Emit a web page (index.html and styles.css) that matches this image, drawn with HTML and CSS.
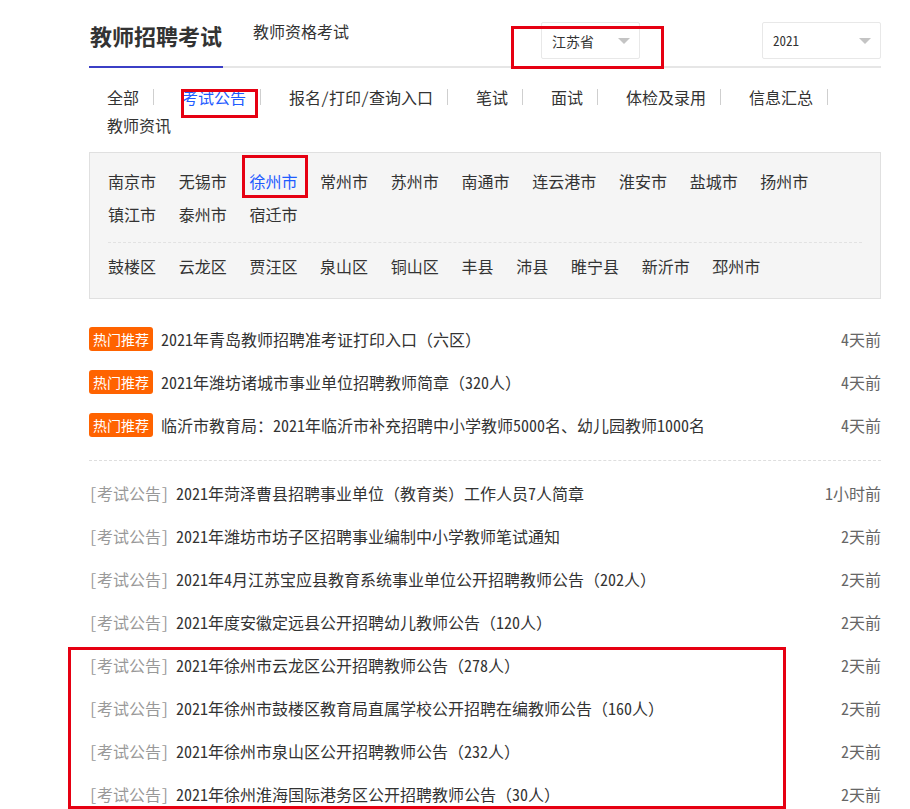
FILE: index.html
```html
<!DOCTYPE html>
<html lang="zh-CN">
<head>
<meta charset="utf-8">
<title>教师招聘考试</title>
<link rel="stylesheet" href="styles.css">
</head>
<body>
<div class="page">
  <div class="head">
    <div class="tab-main">教师招聘考试</div>
    <div class="tab-sub">教师资格考试</div>
    <div class="select select-prov"><span>江苏省</span><i class="tri"></i></div>
    <div class="select select-year"><span>2021</span><i class="tri"></i></div>
  </div>

  <ul class="nav">
    <li>全部</li>
    <li class="on">考试公告</li>
    <li>报名/打印/查询入口</li>
    <li>笔试</li>
    <li>面试</li>
    <li>体检及录用</li>
    <li>信息汇总</li>
    <li>教师资讯</li>
  </ul>

  <div class="cities">
    <div class="city-row">
      <span>南京市</span><span>无锡市</span><span class="on">徐州市</span><span>常州市</span><span>苏州市</span><span>南通市</span><span>连云港市</span><span>淮安市</span><span>盐城市</span><span>扬州市</span><span>镇江市</span><span>泰州市</span><span>宿迁市</span>
    </div>
    <div class="divider"></div>
    <div class="city-row">
      <span>鼓楼区</span><span>云龙区</span><span>贾汪区</span><span>泉山区</span><span>铜山区</span><span>丰县</span><span>沛县</span><span>睢宁县</span><span>新沂市</span><span>邳州市</span>
    </div>
  </div>

  <ul class="hot">
    <li class="item"><span class="badge">热门推荐</span><span class="title">2021年青岛教师招聘准考证打印入口<span class="fw">（</span>六区<span class="fw">）</span></span><span class="time">4天前</span></li>
    <li class="item"><span class="badge">热门推荐</span><span class="title">2021年潍坊诸城市事业单位招聘教师简章<span class="fw">（</span>320人<span class="fw">）</span></span><span class="time">4天前</span></li>
    <li class="item"><span class="badge">热门推荐</span><span class="title">临沂市教育局：2021年临沂市补充招聘中小学教师5000名、幼儿园教师1000名</span><span class="time">4天前</span></li>
  </ul>

  <div class="sep-line"></div>

  <ul class="list">
    <li class="item"><span class="cat">[考试公告]</span><span class="title">2021年菏泽曹县招聘事业单位<span class="fw">（</span>教育类<span class="fw">）</span>工作人员7人简章</span><span class="time">1小时前</span></li>
    <li class="item"><span class="cat">[考试公告]</span><span class="title">2021年潍坊市坊子区招聘事业编制中小学教师笔试通知</span><span class="time">2天前</span></li>
    <li class="item"><span class="cat">[考试公告]</span><span class="title">2021年4月江苏宝应县教育系统事业单位公开招聘教师公告<span class="fw">（</span>202人<span class="fw">）</span></span><span class="time">2天前</span></li>
    <li class="item"><span class="cat">[考试公告]</span><span class="title">2021年度安徽定远县公开招聘幼儿教师公告<span class="fw">（</span>120人<span class="fw">）</span></span><span class="time">2天前</span></li>
    <li class="item"><span class="cat">[考试公告]</span><span class="title">2021年徐州市云龙区公开招聘教师公告<span class="fw">（</span>278人<span class="fw">）</span></span><span class="time">2天前</span></li>
    <li class="item"><span class="cat">[考试公告]</span><span class="title">2021年徐州市鼓楼区教育局直属学校公开招聘在编教师公告<span class="fw">（</span>160人<span class="fw">）</span></span><span class="time">2天前</span></li>
    <li class="item"><span class="cat">[考试公告]</span><span class="title">2021年徐州市泉山区公开招聘教师公告<span class="fw">（</span>232人<span class="fw">）</span></span><span class="time">2天前</span></li>
    <li class="item"><span class="cat">[考试公告]</span><span class="title">2021年徐州淮海国际港务区公开招聘教师公告<span class="fw">（</span>30人<span class="fw">）</span></span><span class="time">2天前</span></li>
  </ul>
</div>

<div class="mark mark-prov"></div>
<div class="mark mark-tab"></div>
<div class="mark mark-city"></div>
<div class="mark mark-list"></div>
</body>
</html>
```

FILE: styles.css
```css
* { box-sizing: border-box; }
html, body { margin: 0; padding: 0; background: #fff; }
body {
  font-family: "Noto Sans CJK SC", "Noto Sans", sans-serif;
  font-feature-settings: "hwid";
  color: #333;
  font-size: 16px;
  overflow: hidden;
  position: relative;
}
ul { list-style: none; margin: 0; padding: 0; }

.page { margin-left: 89px; width: 792px; }

.fw { font-feature-settings: normal; }

/* header */
.head {
  display: flex;
  height: 68px;
  border-bottom: 2px solid #e6e6e6;
}
.tab-main {
  font-size: 22px;
  font-weight: bold;
  line-height: 30px;
  padding: 20px 1px 0 1px;
  border-bottom: 2px solid #3b3fc6;
  margin-bottom: -2px;
  color: #333;
}
.tab-sub {
  margin-left: 30px;
  padding-top: 19px;
  line-height: 24px;
  font-size: 16px;
}
.select {
  display: flex;
  align-items: center;
  justify-content: space-between;
  margin-top: 22px;
  height: 37px;
  border: 1px solid #e8e8e8;
  border-radius: 2px;
  padding: 0 9px 0 10px;
  font-size: 14px;
  color: #333;
}
.select-prov { margin-left: auto; width: 99px; }
.select-year { margin-left: 122px; width: 119px; font-size: 13px; }
.tri {
  width: 0; height: 0;
  border-left: 6px solid transparent;
  border-right: 6px solid transparent;
  border-top: 6px solid #c4c4c4;
}

/* nav */
.nav {
  display: flex;
  flex-wrap: wrap;
  padding: 15px 0 0 18px;
  line-height: 28px;
  font-size: 16px;
}
.nav li {
  display: flex;
  align-items: center;
  margin-right: 28px;
  white-space: nowrap;
}
.nav li::after {
  content: "";
  width: 1px;
  height: 16px;
  background: #cfcfcf;
  margin-left: 14px;
}
.nav li:last-child::after { display: none; }
.nav li.on { color: #1f5cff; }

/* cities */
.cities {
  margin-top: 13px;
  background: #f5f5f5;
  border: 1px solid #e0e0e0;
  padding: 12px 18px 15px 18px;
}
.city-row {
  display: flex;
  flex-wrap: wrap;
  column-gap: 22.7px;
  line-height: 33px;
  font-size: 16px;
}
.city-row .on { color: #1f5cff; }
.divider {
  margin: 11px 0 7px;
  border-top: 1px dashed #e2e2e2;
}

/* lists */
.hot { margin-top: 18px; }
.item {
  display: flex;
  align-items: center;
  height: 43px;
  font-size: 16px;
  white-space: nowrap;
}
.item .title { flex: 1; color: #333; }
.item .time { color: #666; }
.badge {
  background: #ff6300;
  color: #fff;
  font-size: 14px;
  line-height: 24px;
  height: 24px;
  padding: 0 4px;
  border-radius: 3px;
  margin-right: 8px;
}
.sep-line {
  margin-top: 14px;
  border-top: 1px dashed #dedede;
}
.list { margin-top: 10px; }
.cat { color: #999; margin-right: 7px; }

/* red annotation boxes */
.mark {
  position: absolute;
  border: 3px solid #e60012;
  pointer-events: none;
}
.mark-prov { left: 511px; top: 26px; width: 153px; height: 43px; }
.mark-tab { left: 181px; top: 89px; width: 77px; height: 29px; }
.mark-city { left: 242px; top: 155px; width: 66px; height: 43px; }
.mark-list { left: 68px; top: 647px; width: 718px; height: 162px; }
```
